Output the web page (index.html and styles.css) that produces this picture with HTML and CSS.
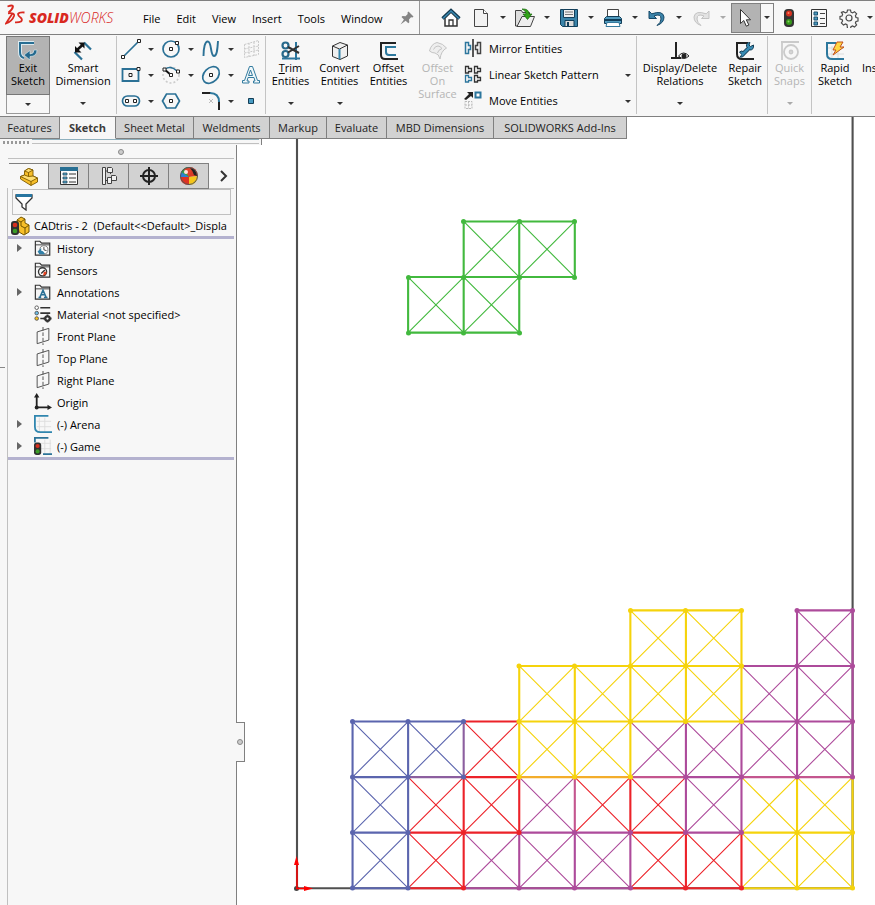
FILE: index.html
```html
<!DOCTYPE html>
<html lang="en">
<head>
<meta charset="utf-8">
<title>SOLIDWORKS</title>
<link rel="stylesheet" href="styles.css">
</head>
<body>
<div class="app">
<header class="menubar">
  <div class="brand">
    <svg class="ds" width="22" height="24" viewBox="0 0 22 24" fill="none" stroke="#d9281f" stroke-width="1.8"><path d="M2.500 2.500Q8 .5 8 2.500Q7.500 5.500 3.500 8.500"/><path d="M3 9.300Q10 8.500 9 12Q7 17.500 1 19.500Q4 14.500 7.500 9.500"/><path d="M19.500 8.500Q14 8 13 10Q13 12 15.500 13.500Q18 15.500 16 17.500Q14 18.500 10 18.300"/></svg>
    <span class="brand-name"><b>SOLID</b><i>WORKS</i></span>
  </div>
  <nav class="menus">
    <button>File</button><button>Edit</button><button>View</button><button>Insert</button><button>Tools</button><button>Window</button>
  </nav>
  <button class="pin" aria-label="Pin menu"><svg width="14" height="14" viewBox="0 0 14 14" fill="#858585"><path d="M8.500.5l5 5-1 1-1.500-.3-2 2.300.3 2.700-1 1-2.600-2.400L.5 13.500l3.400-5L1.500 6l1-1 3 .2L7.700 3l-.2-1.500z"/></svg></button>
  <div class="quick">
    <button class="qi home" aria-label="Home"><svg width="20" height="20" viewBox="0 0 20 20"><path d="M4 10v8h12v-8l-6-6z" fill="#fff" stroke="#333" stroke-width="1.500"/><path d="M8 18v-6h4v6" fill="none" stroke="#333" stroke-width="1.300"/><path d="M1.500 10.500L10 2.500l8.500 8" fill="none" stroke="#12384f" stroke-width="3.200"/><path d="M2 10.500L10 3l8 7.500" fill="none" stroke="#3a87ae" stroke-width="1.600"/></svg></button>
    <button class="qi" aria-label="New"><svg width="20" height="20" viewBox="0 0 20 20"><path d="M3.500 1.500h9l4 4v13h-13z" fill="#f2f2f2" stroke="#444"/><path d="M12.500 1.500v4h4" fill="#fff" stroke="#444"/></svg></button><button class="qc" aria-label="New options"></button>
    <button class="qi" aria-label="Open"><svg width="22" height="20" viewBox="0 0 22 20"><path d="M1.500 18V2.500h6l1 2h7V18z" fill="#ddd" stroke="#444"/><path d="M3 18.500l5-10h12.500l-4 10z" fill="#eee" stroke="#444"/><path d="M8 1q7-.5 7 5h3l-4.500 5.500L9 6h3q0-3.500-4-5z" fill="#31a318" stroke="#17690b" stroke-width=".7"/></svg></button><button class="qc" aria-label="Open options"></button>
    <button class="qi" aria-label="Save"><svg width="20" height="20" viewBox="0 0 20 20"><path d="M1.500 1.500h17v17h-15l-2-2z" fill="#3a83a8" stroke="#123e59"/><path d="M4.500 1.500h11v8h-11z" fill="#eee" stroke="#123e59"/><path d="M6 4h8M6 6.500h8" stroke="#777"/><path d="M6 12.500h9v6H6z" fill="#ddd" stroke="#123e59"/><path d="M8 14h2v4H8z" fill="#123e59"/></svg></button><button class="qc" aria-label="Save options"></button>
    <button class="qi" aria-label="Print"><svg width="20" height="20" viewBox="0 0 20 20"><path d="M4.500 9V1.500h11V9" fill="#fff" stroke="#444"/><path d="M1.500 10.500l2-2h13l2 2v5h-17z" fill="#529cbf" stroke="#123e59"/><path d="M1.500 12h17" stroke="#123e59" stroke-width="2"/><path d="M4 14.500h12l1 4H3z" fill="#fff" stroke="#357a9e"/></svg></button><button class="qc" aria-label="Print options"></button>
    <button class="qi" aria-label="Undo"><svg width="20" height="20" viewBox="0 0 20 20"><path d="M2 3v7.500h7.500L7 8Q14 5 14 11q0 3.500-4 6.500 7-2.500 7-8.500Q16 2 4.800 5.800z" fill="#3b84aa" stroke="#154766"/></svg></button><button class="qc" aria-label="Undo options"></button>
    <button class="qi" aria-label="Redo" disabled><svg width="20" height="20" viewBox="0 0 20 20"><path d="M18 3v7.500h-7.500L13 8Q6 5 6 11q0 3.500 4 6.500-7-2.500-7-8.500Q4 2 15.200 5.800z" fill="#e3e3e3" stroke="#c3c3c3"/></svg></button><button class="qc faint" aria-label="Redo options" disabled></button>
    <div class="select-tool"><button class="pointer" aria-label="Select"><svg width="14" height="20" viewBox="0 0 14 20"><path d="M1.500 1.500v14l3.300-3 2.500 5.700 2.600-1.200-2.600-5.200h4.200z" fill="#fff" stroke="#333"/></svg></button><button class="qc" aria-label="Select options"></button></div>
    <button class="qw" aria-label="Rebuild"><svg width="12" height="20" viewBox="0 0 12 20"><rect x="1" y="1" width="10" height="18" rx="4" fill="#343434"/><circle cx="6" cy="5.500" r="3" fill="#d73220"/><circle cx="6" cy="14" r="3" fill="#37991b"/><circle cx="5.500" cy="5" r="1" fill="#ff8269"/><circle cx="5.500" cy="13.500" r="1" fill="#88d65d"/></svg></button>
    <button class="qw" aria-label="File properties"><svg width="18" height="20" viewBox="0 0 18 20"><path d="M1.500 1.500h15v17h-15z" fill="#f7f7f7" stroke="#333"/><path d="M4 4h3.500v3H4zm0 5h3.500v3H4zm0 5h3.500v3H4z" fill="#4c99bd" stroke="#1c5271"/><path d="M10 5.500h5m-5 5h5m-5 5h5" stroke="#444"/></svg></button>
    <button class="qw" aria-label="Options"><svg width="20" height="20" viewBox="0 0 20 20" fill="none" stroke="#4a4a4a" stroke-width="1.200"><circle cx="10" cy="10" r="3"/><path d="M8.500 2h3l.5 2.200 1.500.7 2-1.200 2.100 2.100-1.200 2 .6 1.700 2 .5v3l-2 .5-.6 1.500 1.200 2-2.100 2.100-2-1.200-1.500.7-.5 2h-3L8 16.600l-1.500-.7-2 1.200L2.400 15l1.200-2L3 11.500 1 11V8.500L3 8l.6-1.700-1.200-2 2.100-.6 2 1.200L8 4.200z"/></svg></button>
    <button class="qc last" aria-label="More options"></button>
  </div>
</header>

<section class="ribbon" aria-label="Sketch tools">
  <div class="exit">
    <button class="big"><svg width="20" height="20" viewBox="0 0 20 20"><path d="M16 2H2v9q0 5 4 6" fill="none" stroke="#dcebf1" stroke-width="4"/><path d="M16 2H2v9q0 5 4 6" fill="none" stroke="#286e93" stroke-width="2"/><path d="M19 9q0 6.500-7 6.500V19L6 14l6-4.500V13q4 0 4-4z" fill="#24698e" stroke="#dcecf2" stroke-width=".6"/></svg><span>Exit<br>Sketch</span></button>
    <button class="drop" aria-label="Exit sketch options"></button>
  </div>
  <div class="tool dim"><button class="big"><svg width="20" height="20" viewBox="0 0 20 20"><path d="M11 1.500l7 7M1.500 11l7.500 7.500" stroke="#2b7196" stroke-width="2.200"/><path d="M4 9l6-5.500" stroke="#111" stroke-width="2.500"/><path d="M5.500 1.500H11.500v6zM2 5v6.500h6.500z" fill="#111"/></svg><span>Smart<br>Dimension</span></button><button class="drop" aria-label="Dimension options"></button></div>
  <div class="sketch-grid">
    <button aria-label="Line"><svg width="20" height="20" viewBox="0 0 20 20"><path d="M2 18L18 2" stroke="#2b7196" stroke-width="1.700"/><path d="M.5 16.500h3v3h-3zm16-16h3v3h-3z" fill="#fff" stroke="#222"/></svg></button><button class="qc" aria-label="Line options"></button>
    <button aria-label="Circle"><svg width="20" height="20" viewBox="0 0 20 20"><circle cx="10" cy="10" r="8" fill="none" stroke="#2b7196" stroke-width="1.700"/><path d="M8.500 8.500h3v3h-3zm6-6h3v3h-3z" fill="#fff" stroke="#222"/></svg></button><button class="qc" aria-label="Circle options"></button>
    <button aria-label="Spline"><svg width="20" height="20" viewBox="0 0 20 20"><path d="M2.500 17C2.500 9 4 2 7 2.500c4 .5 2 14 6 14.500 3 0 3.500-7 4-15" fill="none" stroke="#2b7196" stroke-width="1.900"/></svg></button><button class="qc" aria-label="Spline options"></button>
    <button aria-label="Plane" disabled><svg width="20" height="20" viewBox="0 0 20 20" fill="none" stroke="#c9c9c9" stroke-dasharray="2 1"><path d="M3.500 5.500l14-4v14l-14 3zM8 4v14m5-15v14M3.500 10l14-3m-14 7l14-3"/></svg></button>

    <button aria-label="Rectangle"><svg width="20" height="20" viewBox="0 0 20 20"><path d="M1.500 4h16v12h-16z" fill="none" stroke="#2b7196" stroke-width="1.800"/><path d="M8 8.500h3v3H8zm8-6h3v3h-3z" fill="#fff" stroke="#222"/></svg></button><button class="qc" aria-label="Rectangle options"></button>
    <button aria-label="Arc"><svg width="20" height="20" viewBox="0 0 20 20"><circle cx="10" cy="10" r="8" fill="none" stroke="#ccc" stroke-width="1.600" stroke-dasharray="2 2"/><path d="M4 4q6-4 12 2" fill="none" stroke="#2b7196" stroke-width="1.500"/><path d="M3 4l7 6" stroke="#111" stroke-width="2"/><path d="M2 3h3v3H2zm6.500 5.500h3v3h-3zm7-3.500h3v3h-3z" fill="#fff" stroke="#222"/></svg></button><button class="qc" aria-label="Arc options"></button>
    <button aria-label="Ellipse"><svg width="20" height="20" viewBox="0 0 20 20"><ellipse cx="10" cy="10" rx="9.500" ry="7" transform="rotate(-45 10 10)" fill="none" stroke="#2b7196" stroke-width="1.700"/><path d="M8.500 8.500h3v3h-3z" fill="#fff" stroke="#222"/></svg></button><button class="qc" aria-label="Ellipse options"></button>
    <button aria-label="Text"><svg width="20" height="20" viewBox="0 0 20 20" fill="#eff7fa" stroke="#337b9f"><path d="M8.500 1.500h3l5 14h2v2.500h-6v-2h1.500l-1-3.500H7L6 16h2v2H1.500v-2.500h2zM9.500 5L7.500 10.500h4z"/></svg></button>

    <button aria-label="Slot"><svg width="20" height="20" viewBox="0 0 20 20"><rect x="1.500" y="5" width="17" height="10" rx="5" fill="none" stroke="#2b7196" stroke-width="1.700"/><path d="M4.500 8.500h3v3h-3zm8 0h3v3h-3z" fill="#fff" stroke="#222"/></svg></button><button class="qc" aria-label="Slot options"></button>
    <button aria-label="Polygon"><svg width="20" height="20" viewBox="0 0 20 20"><path d="M1.500 10l4-7h9l4 7-4 7h-9z" fill="none" stroke="#2b7196" stroke-width="1.700"/><path d="M8.500 8.500h3v3h-3z" fill="#fff" stroke="#222"/></svg></button><span></span>
    <button aria-label="Fillet"><svg width="20" height="20" viewBox="0 0 20 20" fill="none" stroke-width="2"><path d="M1 2h9M18 10v9" stroke="#222"/><path d="M9 2q9 0 9 9" stroke="#2d789d"/><path d="M8 8l4 4m0-4l-4 4" stroke="#bbb" stroke-width="1"/></svg></button><button class="qc" aria-label="Fillet options"></button>
    <button aria-label="Point"><svg width="20" height="20" viewBox="0 0 20 20"><path d="M7.500 7.500h5v5h-5z" fill="#479bc3" stroke="#143e56"/></svg></button>
  </div>
  <div class="tools">
    <div class="tool"><button class="big"><svg width="20" height="20" viewBox="0 0 20 20" fill="none"><path d="M1 17.500h18M15 1v18" stroke="#2c769d" stroke-width="2"/><circle cx="4.500" cy="4.500" r="3" stroke="#286a8c" stroke-width="2.200"/><circle cx="4.500" cy="13" r="3" stroke="#286a8c" stroke-width="2.200"/><path d="M7 6l11 6M7 11.500L18 5" stroke="#333" stroke-width="2"/></svg><span><u>T</u>rim<br>Entities</span></button><button class="drop" aria-label="Trim options"></button></div>
    <div class="tool"><button class="big"><svg width="20" height="20" viewBox="0 0 20 20" stroke="#333"><path d="M2.500 5L10 1.500 17.500 4v11L10 18.500l-7.500-3z" fill="#efefef"/><path d="M2.500 5l7 3 8-4" fill="none"/><path d="M9.500 8v10" stroke="#3585aa" stroke-width="2"/></svg><span>Convert<br>Entities</span></button><button class="drop" aria-label="Convert options"></button></div>
    <div class="tool"><button class="big"><svg width="20" height="20" viewBox="0 0 20 20" fill="none" stroke-width="2"><path d="M17 2H2v12q0 4 4 4h13" stroke="#222"/><path d="M17 6H7v5q0 3 3 3h7" stroke="#2d789d"/></svg><span>Offset<br>Entities</span></button></div>
    <div class="tool"><button class="big" disabled><svg width="20" height="20" viewBox="0 0 20 20" fill="#eee" stroke="#c4c4c4"><path d="M1.500 10Q3 3 9 1.500q6 1 9.500 5.500Q13 10 12 18q-1-5-5-6Q4 12 1.500 10z"/><path d="M5.500 8.500Q7 5 10 5q2 0 4 2.500Q10 9 9.500 12"/></svg><span>Offset<br>On<br>Surface</span></button></div>
  </div>
  <div class="entity-list">
    <div><button class="entity"><svg width="18" height="18" viewBox="0 0 18 18" fill="none" stroke-width="1.500"><path d="M9 0v18" stroke="#222"/><path d="M1.500 3.500h3v3h2v4h-2v4h-3z" stroke="#2c769d"/><path d="M16.500 3.500h-3v3h-2v4h2v4h3z" stroke="#444"/></svg>Mirror Entities</button></div>
    <div><button class="entity"><svg width="18" height="18" viewBox="0 0 18 18" fill="none" stroke-width="1.300"><path d="M1.500 1.500h3v2h3v3h-3v1.500h-3zm9 0h3v2h3v3h-3v1.500h-3zm0 9h3v2h3v3h-3V17h-3z" stroke="#333"/><path d="M1.500 10.500h3v2h3v3h-3V17h-3z" stroke="#2c769d"/></svg>Linear Sketch Pattern</button><button class="qc" aria-label="Pattern options"></button></div>
    <div><button class="entity"><svg width="18" height="18" viewBox="0 0 18 18"><path d="M0 8l5-5-2-2h6v6L7 5 2 9z" fill="#222"/><path d="M11.500 1.500h5v5h-5z" fill="#fff" stroke="#2c769d" stroke-width="2"/><path d="M1 10.500h7v7H1zm3.500 0v7m-3.500-3.500h7" fill="none" stroke="#bbb" stroke-dasharray="2 1"/></svg>Move Entities</button><button class="qc" aria-label="Move options"></button></div>
  </div>
  <div class="tool relations"><button class="big"><svg width="20" height="20" viewBox="0 0 20 20" fill="none"><path d="M6 1v15M1 17h10" stroke="#222" stroke-width="2"/><path d="M8.500 15q5-6 10.500 0-5.500 5-10.500 0z" fill="#fff" stroke="#222"/><circle cx="14" cy="15" r="2.500" fill="#222"/></svg><span>Display/Delete<br>Relations</span></button><button class="drop" aria-label="Relations options"></button></div>
  <div class="tool repair"><button class="big"><svg width="20" height="20" viewBox="0 0 20 20" fill="none"><path d="M13 2H2v11q0 5 5 5h12" stroke="#222" stroke-width="2"/><path d="M7 14l8-8" stroke="#163f57" stroke-width="4.500"/><path d="M4.500 11q2-2 4.500 0v3q-1 3-4 2l2-2.500zM18.500 4l-3 1.500L14 4l1-2.500q-4 0-3.500 4l3.500 3.500q4 0 3.500-5z" fill="#388bb3" stroke="#163f57"/><path d="M7 14l8-8" stroke="#388bb3" stroke-width="2.500"/></svg><span>Repair<br>Sketch</span></button></div>
  <div class="tool snaps"><button class="big" disabled><svg width="20" height="20" viewBox="0 0 20 20" fill="none" stroke="#cacaca" stroke-width="1.800"><path d="M1 1h18M2 2v17"/><circle cx="11" cy="11" r="7"/><circle cx="11" cy="11" r="1.500"/></svg><span>Quick<br>Snaps</span></button><button class="drop faint" aria-label="Snap options" disabled></button></div>
  <div class="tool rapid"><button class="big"><svg width="20" height="20" viewBox="0 0 20 20" fill="none"><path d="M7 5v14M13 5v14M3 7h16M3 13h16" stroke="#ddd"/><path d="M11 2H2v11q0 5 5 5h12" stroke="#2d789d" stroke-width="2"/><path d="M12 1h6l-3 5h4L8 14l3-5H8z" fill="#ffd743" stroke="#c3501d"/></svg><span>Rapid<br>Sketch</span></button></div>
  <div class="tool instant"><button class="big"><span>Instant2D</span></button></div>
</section>

<main class="workspace">
  <svg class="canvas" aria-label="Sketch graphics area">
    <g transform="translate(0 -1)">
    <g transform="translate(297 772.200) scale(55.560 -55.560)" fill="none">
      <path class="edge wall" d="M0 14V0H10V14"/>
      <g class="cross">
        <path class="blue" d="M1 0l1 1m-1 0l1-1M1 1l1 1m-1 0l1-1M1 2l1 1m-1 0l1-1M2 2l1 1m-1 0l1-1"/>
        <path class="red" d="M2 0l1 1m-1 0l1-1M6 0l1 1m-1 0l1-1M7 0l1 1m-1 0l1-1M2 1l1 1m-1 0l1-1M3 1l1 1m-1 0l1-1M5 1l1 1m-1 0l1-1M6 1l1 1m-1 0l1-1M3 2l1 1m-1 0l1-1"/>
        <path class="purple" d="M3 0l1 1m-1 0l1-1M4 0l1 1m-1 0l1-1M5 0l1 1m-1 0l1-1M4 1l1 1m-1 0l1-1M7 1l1 1m-1 0l1-1M6 2l1 1m-1 0l1-1M7 2l1 1m-1 0l1-1M8 2l1 1m-1 0l1-1M9 2l1 1m-1 0l1-1M8 3l1 1m-1 0l1-1M9 3l1 1m-1 0l1-1M9 4l1 1m-1 0l1-1"/>
        <path class="yellow" d="M8 0l1 1m-1 0l1-1M9 0l1 1m-1 0l1-1M8 1l1 1m-1 0l1-1M9 1l1 1m-1 0l1-1M4 2l1 1m-1 0l1-1M5 2l1 1m-1 0l1-1M4 3l1 1m-1 0l1-1M5 3l1 1m-1 0l1-1M6 3l1 1m-1 0l1-1M7 3l1 1m-1 0l1-1M6 4l1 1m-1 0l1-1M7 4l1 1m-1 0l1-1"/>
        <path class="green" d="M2 10l1 1m-1 0l1-1M3 10l1 1m-1 0l1-1M3 11l1 1m-1 0l1-1M4 11l1 1m-1 0l1-1"/>
      </g>
      <path class="edge purple" d="M3 0H6M4 1H6M7 1H8M7 2H8M8 3H10M8 4H10M9 5H10M4 0V1M5 0V1M6 0V1M7 1V3M8 1V3M9 2V5M10 2V5"/>
      <path class="edge red" d="M2 0H3M6 0H8M2 1H4M6 1H7M3 2H4M3 3H4M3 0V2M4 1V2M6 1V2M7 0V1M8 0V1"/>
      <path class="edge blue" d="M1 0H2M1 1H2M1 2H2M1 3H3M1 0V3M2 0V3"/>
      <path class="edge yellow" d="M8 0H10M8 1H10M4 3H8M4 4H8M6 5H8M4 2V4M5 2V4M6 2V5M7 3V5M8 3V5M9 0V2M10 0V2"/>
      <path class="edge orange" d="M4 2H6"/>
      <path class="edge rose" d="M6 2H7M8 2H10M5 1V2"/>
      <path class="edge plum" d="M2 2H3M3 2V3"/>
      <path class="edge green" d="M2 10H4V12M2 10V11H5V12H3V10"/>
    </g>
    <g class="points">
      <g class="blue"><circle cx="352.500" cy="772"/><circle cx="408" cy="772"/><circle cx="352.500" cy="716.500"/><circle cx="408" cy="716.500"/><circle cx="352.500" cy="661"/><circle cx="408" cy="661"/><circle cx="463.500" cy="661"/><circle cx="352.500" cy="605.500"/><circle cx="408" cy="605.500"/><circle cx="463.500" cy="605.500"/></g>
      <g class="red"><circle cx="463.500" cy="772"/><circle cx="463.500" cy="716.500"/><circle cx="519" cy="716.500"/><circle cx="685.500" cy="772"/><circle cx="741.500" cy="772"/></g>
      <g class="purple"><circle cx="519" cy="772"/><circle cx="574.500" cy="772"/><circle cx="630.500" cy="772"/><circle cx="574.500" cy="716.500"/><circle cx="630.500" cy="716.500"/><circle cx="685.500" cy="716.500"/><circle cx="741.500" cy="716.500"/><circle cx="685.500" cy="661"/><circle cx="741.500" cy="661"/><circle cx="797" cy="661"/><circle cx="852.500" cy="661"/><circle cx="797" cy="605.500"/><circle cx="852.500" cy="605.500"/><circle cx="797" cy="550"/><circle cx="852.500" cy="550"/><circle cx="797" cy="494.500"/><circle cx="852.500" cy="494.500"/></g>
      <g class="yellow"><circle cx="797" cy="772"/><circle cx="852.500" cy="772"/><circle cx="797" cy="716.500"/><circle cx="852.500" cy="716.500"/><circle cx="519" cy="661"/><circle cx="574.500" cy="661"/><circle cx="630.500" cy="661"/><circle cx="519" cy="605.500"/><circle cx="574.500" cy="605.500"/><circle cx="630.500" cy="605.500"/><circle cx="685.500" cy="605.500"/><circle cx="741.500" cy="605.500"/><circle cx="519" cy="550"/><circle cx="574.500" cy="550"/><circle cx="630.500" cy="550"/><circle cx="685.500" cy="550"/><circle cx="741.500" cy="550"/><circle cx="630.500" cy="494.500"/><circle cx="685.500" cy="494.500"/><circle cx="741.500" cy="494.500"/></g>
      <g class="green"><circle cx="408.500" cy="217"/><circle cx="463.500" cy="217"/><circle cx="519.500" cy="217"/><circle cx="408.500" cy="161.500"/><circle cx="463.500" cy="161.500"/><circle cx="519.500" cy="161.500"/><circle cx="574.500" cy="161.500"/><circle cx="463.500" cy="105.500"/><circle cx="519.500" cy="105.500"/><circle cx="574.500" cy="105.500"/></g>
      <circle cx="296.500" cy="772.500" fill="#444"/>
    </g>
    <path d="M297 773V748M296 772.500H306" fill="none" stroke="#f00" stroke-width="1.500"/><path d="M294 749l2.500-9 2.500 9zM304 770l9 2.500-9 2.500z" fill="#f00"/>
    </g>
  </svg>

  <nav class="tabs" aria-label="Command manager">
    <button>Features</button><button class="on">Sketch</button><button>Sheet Metal</button><button>Weldments</button><button>Markup</button><button>Evaluate</button><button>MBD Dimensions</button><button>SOLIDWORKS Add-Ins</button>
  </nav>
  <div class="splitter"><i class="grip"></i><i class="rail"></i></div>
  <aside class="panel">
    <div class="gutter"></div>
    <div class="manager">
      <div class="knob"><i></i></div>
      <div class="ptabs">
        <button class="on" aria-label="Feature tree"><svg width="20" height="20" viewBox="0 0 20 20" stroke="#7d5a00" stroke-width=".9" stroke-linejoin="round"><path d="M1.500 9.500L5.500 8V4l4-2.500L14 3v6l4.500 2v4L12 18.500 1.500 12z" fill="#f7bf2a"/><path d="M5.500 4L9.500 5.500 14 3 9.500 1.500zM1.500 9.500l4-1.500L9.500 9.500 14 9l4.500 2-6.500 3.500z" fill="#ffdf72"/><path d="M9.500 5.500v4M12 14.500v4" fill="none"/></svg></button>
        <button aria-label="Properties"><svg width="20" height="20" viewBox="0 0 20 20"><path d="M1.500 1.500h17v17h-17z" fill="#fafafa" stroke="#333"/><path d="M1 1h18v4H1z" fill="#286f93"/><path d="M4 7h4v2H4zm0 4h4v2H4zm0 4h4v2H4z" fill="#55a9d0" stroke="#25485a" stroke-width=".8"/><path d="M10 8h7m-7 4h7m-7 4h7" stroke="#333"/></svg></button>
        <button aria-label="Configurations"><svg width="20" height="20" viewBox="0 0 20 20" fill="#f1f1f1" stroke="#444"><path d="M3.500 1.500h3v17h-3z"/><path d="M6.500 5h3M6.500 14.500h3m3 0h1M11.500 8V6" fill="none"/><path d="M8.500 1.500h4l1 1v4h-5zM8.500 11.500h4v6h-4zM12.500 9.500h4l1 1v4h-5z"/></svg></button>
        <button aria-label="Dimension expert"><svg width="20" height="20" viewBox="0 0 20 20" fill="none" stroke="#222" stroke-width="2"><circle cx="10" cy="10" r="6"/><path d="M10 1v18M1 10h18"/></svg></button>
        <button aria-label="Appearances"><svg width="20" height="20" viewBox="0 0 20 20"><path d="M10 11V1Q5 1 2.500 6 1 9 1 11z" fill="#2d80d3"/><path d="M10 1v10l9-1Q18 1 10 1z" fill="#d93a26"/><path d="M2 6q3-5 8-5v10z" fill="#3aa045"/><path d="M10 1L5 3l5 8 3-9z" fill="#e2432b"/><path d="M1 11h9v8q-8 0-9-8z" fill="#dc3324"/><path d="M10 11v8q8 0 9-9z" fill="#f4c51a"/><path d="M11 2q6 0 7 8l-3-1q-1-4-4-7z" fill="#222"/><circle cx="10" cy="10" r="8.500" fill="none" stroke="#555"/><circle cx="7" cy="6" r="2" fill="#ffe3dc"/></svg></button>
        <button class="more" aria-label="More tabs"><svg width="8" height="12" viewBox="0 0 8 12"><path d="M1 1l5 5-5 5" fill="none" stroke="#333" stroke-width="2"/></svg></button>
      </div>
      <label class="filter"><svg width="18" height="18" viewBox="0 0 18 18"><path d="M1 2h16v3l-6 6v6l-4-3v-3L1 5z" fill="#fff" stroke="#333" stroke-width="1.300"/><path d="M1 1h16v3H1z" fill="#2775a0"/></svg><input type="text" aria-label="Filter tree"></label>
      <div class="root"><svg width="20" height="20" viewBox="0 0 20 20"><path d="M6 4l4-3 4 2v4l4 2v7l-5 3-5-3z" fill="#f7bf2a" stroke="#755600"/><path d="M6 4l4 2 4-3m-4 3v4l4 2 4-3m-4 3v6" fill="none" stroke="#755600"/><rect x="0" y="5" width="8" height="14" rx="3" fill="#303030"/><circle cx="4" cy="9" r="2.300" fill="#d72f1f"/><circle cx="4" cy="15" r="2.300" fill="#3a9c27"/></svg><span>CADtris - 2&nbsp; (Default&lt;&lt;Default&gt;_Displa</span></div>
      <ul class="tree">
        <li class="open"><svg viewBox="0 0 20 20"><path d="M1.500 18V2.500h5l2 2h9V18z" fill="#f5f5f5" stroke="#333" stroke-width="1.300"/><path d="M1.500 6.500h16" stroke="#333"/><circle cx="11" cy="12" r="4.500" fill="#fff" stroke="#777"/><path d="M11 9v3l3 1" fill="none" stroke="#333"/><path d="M4 14l4-4v3q3 0 4 4H6z" fill="#317fa7"/></svg>History</li>
        <li><svg viewBox="0 0 20 20"><path d="M1.500 18V2.500h5l2 2h9V18z" fill="#f5f5f5" stroke="#333" stroke-width="1.300"/><path d="M1.500 6.500h16" stroke="#333"/><circle cx="9.500" cy="12" r="4.500" fill="#fff" stroke="#333" stroke-width="1.500"/><path d="M10 16q4 0 4-4h-3z" fill="#e54422"/><path d="M8 14l4-4" stroke="#333" stroke-width="1.500"/></svg>Sensors</li>
        <li class="open"><svg viewBox="0 0 20 20"><path d="M1.500 18V2.500h5l2 2h9V18z" fill="#f5f5f5" stroke="#333" stroke-width="1.300"/><path d="M1.500 6.500h16" stroke="#333"/><path d="M5 16h3m3 0h4M6.500 16L10 8l3.500 8M7.500 13h5" fill="none" stroke="#286f95" stroke-width="1.700"/></svg>Annotations</li>
        <li><svg viewBox="0 0 20 20"><g stroke="#555"><circle cx="3" cy="3" r="2" fill="#fff"/><circle cx="3" cy="9" r="2" fill="#69bde8"/><circle cx="3" cy="15" r="2" fill="#f4c01e"/></g><path d="M7 3h11M7 9h11M7 15h5" stroke="#333" stroke-width="1.800"/><circle cx="15" cy="15" r="2.500" fill="#fff" stroke="#333" stroke-width="2.500"/><path d="M15 10.500v2m0 5v2M10.500 15h2m5 0h2" stroke="#333" stroke-width="2"/></svg>Material &lt;not specified&gt;</li>
        <li><svg viewBox="0 0 20 20" fill="none" stroke="#444"><path d="M3.500 5.500l13-4v13l-13 4z"/><path d="M10 0v20" stroke-dasharray="4 2"/></svg>Front Plane</li>
        <li><svg viewBox="0 0 20 20" fill="none" stroke="#444"><path d="M3.500 5.500l13-4v13l-13 4z"/><path d="M10 0v20" stroke-dasharray="4 2"/></svg>Top Plane</li>
        <li><svg viewBox="0 0 20 20" fill="none" stroke="#444"><path d="M3.500 5.500l13-4v13l-13 4z"/><path d="M10 0v20" stroke-dasharray="4 2"/></svg>Right Plane</li>
        <li><svg viewBox="0 0 20 20" fill="#222"><path d="M2 4h2v11h11v-2l5 3-5 3v-2H2zM3 0l3 5H0z"/><circle cx="3" cy="16" r="2.200"/></svg>Origin</li>
        <li class="open"><svg viewBox="0 0 20 20" fill="none"><path d="M6 3v16M12 3v16M3 7h16M3 13h16" stroke="#ddd"/><path d="M16 1H1v12q0 6 6 6h13" stroke="#3086af" stroke-width="2"/></svg>(-) Arena</li>
        <li class="open"><svg viewBox="0 0 20 20" fill="none"><path d="M12 3v16M18 3v16M3 7h16M3 13h16" stroke="#ddd"/><path d="M16 1H1v5m9 13h10" stroke="#2b7398" stroke-width="2"/><rect x="0" y="6" width="8" height="14" rx="3" fill="#303030"/><circle cx="4" cy="10" r="2.300" fill="#d72f1f"/><circle cx="4" cy="16" r="2.300" fill="#3a9c27"/></svg>(-) Game</li>
      </ul>
    </div>
    <button class="handle" aria-label="Resize panel"><i></i></button>
  </aside>
</main>
</div>
</body>
</html>
```
FILE: styles.css
```css
* { box-sizing: border-box; }
body { margin: 0; background: #fff; color: #000; font: 11px/13px "Open Sans", "Noto Sans", sans-serif; overflow: hidden; }
button { margin: 0; padding: 0; border: 0; background: none; color: inherit; font: inherit; white-space: nowrap; }
button svg { display: block; flex: none; }
.app { min-height: 100vh; display: flex; flex-direction: column; }

.menubar { display: flex; align-items: stretch; height: 35px; flex: none; background: #f7f7f7; border-top: 1px solid #808080; border-bottom: 1px solid #808080; }
.menubar > * { flex: none; }
.brand { display: flex; align-items: center; gap: 2px; width: 136px; padding-left: 5px; color: #d9281f; }
.ds { margin-bottom: 4px; }
.brand-name { font-size: 14px; line-height: 16px; }
.brand-name b { font-weight: 800; font-style: italic; }
.brand-name i { font-weight: 300; }
.menus { display: flex; width: 264px; }
.menus button { padding: 2px 7px 0; margin-right: 2px; }
.pin { width: 14px; }
.quick { display: flex; align-items: center; margin-left: 5px; padding-left: 17px; border-left: 1px solid #999; }
.quick > * { flex: none; }
.qi, .qw, .pointer { display: flex; justify-content: center; align-items: center; width: 28px; height: 28px; }
.home { margin-right: 2px; }
.qw { width: 30px; }
.qc { display: flex; justify-content: center; align-items: center; width: 16px; height: 20px; }
.qc.last { width: 11px; }
.qc::after, .drop::after { content: ""; border: 3px solid transparent; border-top-color: #333; border-bottom: 0; }
.qc.faint::after, .drop.faint::after { border-top-color: #aaa; }
.select-tool { display: flex; align-items: center; width: 43px; height: 30px; border: 1px solid #808080; }
.pointer { width: 30px; background: #b3b3b3; border-right: 1px solid #808080; }
.select-tool .qc { width: 12px; }

.ribbon { display: flex; height: 82px; flex: none; padding: 1px 0 2px 6px; background: #f7f7f7; border-bottom: 1px solid #808080; overflow: hidden; }
.ribbon > * { flex: none; }
.exit { width: 44px; }
.exit .big { height: 59px; border: 1px solid #777; background: #b3b3b3; }
.exit .drop { height: 19px; border: 1px solid #999; border-top: 0; }
.big { display: flex; flex-direction: column; align-items: center; width: 100%; height: 64px; padding-top: 5px; text-align: center; }
.exit .big { padding-top: 4px; }
.big:disabled { color: #b5b5b5; }
.tool { width: 49px; }
.drop { display: flex; justify-content: center; align-items: center; width: 100%; height: 6px; }
.dim { width: 66px; }
.sketch-grid { display: grid; grid-template-columns: 24px 16px 24px 16px 24px 16px 24px; grid-auto-rows: 26px; align-items: center; justify-items: center; padding: 0 2px; border-left: 1px solid #c4c4c4; border-right: 1px solid #c4c4c4; }
.tools { display: flex; }
.entity-list { width: 175px; padding-left: 2px; border-right: 1px solid #c4c4c4; }
.entity-list > div { display: flex; align-items: center; justify-content: space-between; height: 26px; }
.entity { display: flex; align-items: center; gap: 7px; padding-bottom: 2px; }
.relations { width: 86px; }
.repair { width: 45px; border-right: 1px solid #c4c4c4; }
.snaps { width: 44px; border-right: 1px solid #c4c4c4; }
.rapid { width: 46px; }
.instant { width: 60px; padding: 20px 0 0 4px; }
.instant .big { align-items: flex-start; }

.workspace { flex: 1; display: grid; grid-template: 22px 6px 1fr / 237px 1fr; min-height: 788px; }
.canvas { grid-area: 1 / 1 / 4 / 3; width: 100%; height: 100%; }
.wall { stroke: #505050; }
.edge { stroke-width: .038; }
.cross { stroke-width: .02; }
.points circle { r: 2.5px; }
.blue { stroke: #5b65ae; }
.red { stroke: #ec2229; }
.purple { stroke: #ad4b9b; }
.yellow { stroke: #f5d30c; }
.green { stroke: #42b93e; }
.orange { stroke: #f3ad2b; }
.rose { stroke: #c4568f; }
.plum { stroke: #8c5f9f; }
.points g { stroke: none; }
.points .blue { fill: #5b65ae; }
.points .red { fill: #ec2229; }
.points .purple { fill: #ad4b9b; }
.points .yellow { fill: #f5d30c; }
.points .green { fill: #42b93e; }

.tabs { grid-area: 1 / 1 / 2 / 3; justify-self: start; display: grid; grid-template-columns: 60px 56px 78px 76px 57px 60px 107px 133px; position: relative; }
.tabs button { border-right: 1px solid #808080; border-bottom: 1px solid #808080; background: #d2d2d2; color: #222; }
.tabs .on { background: #f7f7f7; border-bottom-color: #f7f7f7; font-weight: 700; color: #3c3c3c; }
.splitter { grid-area: 2 / 1 / 3 / 3; justify-self: start; position: relative; display: flex; gap: 2px; width: 262px; background: #f7f7f7; border-right: 1px solid #808080; padding-left: 3px; }
.grip { width: 27px; height: 3px; margin-top: 2px; background: repeating-linear-gradient(90deg, #999 0 2px, transparent 2px 4px); }
.rail { flex: 1; margin-right: 2px; height: 5px; border-top: 1px solid #8fb0bd; border-bottom: 1px solid #c0c0c0; }
.panel { grid-area: 3 / 1; position: relative; display: flex; background: #f7f7f7; border-right: 1px solid #808080; min-width: 0; }
.gutter { width: 7px; background: linear-gradient(#888, #888) 0 222px / 5px 1px no-repeat; }
.manager { flex: 1; min-width: 0; margin-right: 2px; padding-left: 1px; background: linear-gradient(#c0c0c0, #c0c0c0) 0 43px / 1px 100% no-repeat; }
.knob { height: 14px; display: flex; justify-content: center; align-items: center; border-bottom: 1px solid #c0c0c0; }
.knob i, .handle i { width: 6px; height: 6px; border: 1px solid #888; border-radius: 50%; background: #ccc; }
.ptabs { display: grid; grid-template-columns: 40px 40px 40px 40px 40px 1fr; height: 26px; margin: 4px 0 0 1px; }
.ptabs button { display: grid; place-items: center; border: 1px solid #808080; border-left: 0; background: #d2d2d2; }
.ptabs .on { background: none; border-bottom: 0; }
.ptabs .more { background: none; border: 0; border-bottom: 1px solid #c0c0c0; padding-left: 4px; }
.filter { display: flex; align-items: center; height: 26px; margin: 0 3px 0 4px; padding-left: 2px; border: 1px solid #c0c0c0; }
.filter input { flex: 1; min-width: 0; height: 20px; border: 0; outline: 0; background: none; font: inherit; }
.root { display: flex; align-items: center; gap: 3px; height: 24px; padding-left: 3px; border-bottom: 3px solid #b4b2cf; overflow: hidden; white-space: nowrap; }
.root svg { flex: none; }
.tree { list-style: none; margin: -2px 0 0; padding: 0; border-bottom: 3px solid #b4b2cf; }
.tree li { display: flex; align-items: center; gap: 5px; height: 22px; padding-left: 9px; }
.tree li::before { content: ""; width: 12px; height: 8px; }
.tree .open::before { background: #666; clip-path: polygon(0 0, 5px 4px, 0 8px); }
.tree svg { width: 18px; height: 18px; }
.handle { position: absolute; right: -9px; top: 577px; display: flex; align-items: center; justify-content: center; width: 9px; height: 40px; background: #f7f7f7; border: 1px solid #808080; border-left: 0; }
```
